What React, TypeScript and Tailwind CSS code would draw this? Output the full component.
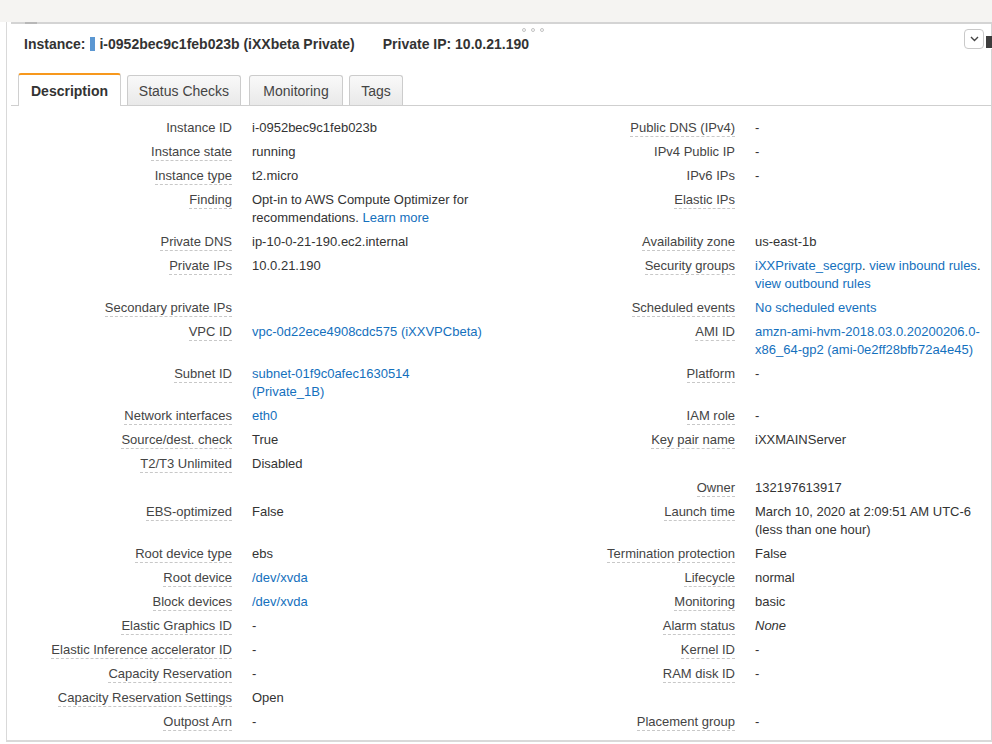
import type { ReactNode } from 'react';

interface Field {
  label?: string;
  value?: ReactNode;
  plain?: boolean;
}

interface Row {
  l: Field;
  r: Field;
}

const A = ({ children }: { children: ReactNode }) => <span className="text-[#1470bd]">{children}</span>;

const rows: Row[] = [
  { l: { label: 'Instance ID', value: 'i-0952bec9c1feb023b', plain: true }, r: { label: 'Public DNS (IPv4)', value: '-' } },
  { l: { label: 'Instance state', value: 'running' }, r: { label: 'IPv4 Public IP', value: '-', plain: true } },
  { l: { label: 'Instance type', value: 't2.micro' }, r: { label: 'IPv6 IPs', value: '-', plain: true } },
  {
    l: {
      label: 'Finding',
      value: (
        <>
          Opt-in to AWS Compute Optimizer for
          <br />
          recommendations. <A>Learn more</A>
        </>
      ),
    },
    r: { label: 'Elastic IPs', value: '' },
  },
  { l: { label: 'Private DNS', value: 'ip-10-0-21-190.ec2.internal' }, r: { label: 'Availability zone', value: 'us-east-1b' } },
  {
    l: { label: 'Private IPs', value: '10.0.21.190' },
    r: {
      label: 'Security groups',
      value: (
        <>
          <A>iXXPrivate_secgrp</A>. <A>view inbound rules</A>.
          <br />
          <A>view outbound rules</A>
        </>
      ),
    },
  },
  { l: { label: 'Secondary private IPs', value: '' }, r: { label: 'Scheduled events', value: <A>No scheduled events</A> } },
  {
    l: { label: 'VPC ID', value: <A>vpc-0d22ece4908cdc575 (iXXVPCbeta)</A> },
    r: {
      label: 'AMI ID',
      value: (
        <A>
          amzn-ami-hvm-2018.03.0.20200206.0-
          <br />
          x86_64-gp2 (ami-0e2ff28bfb72a4e45)
        </A>
      ),
    },
  },
  {
    l: {
      label: 'Subnet ID',
      value: (
        <A>
          subnet-01f9c0afec1630514
          <br />
          (Private_1B)
        </A>
      ),
    },
    r: { label: 'Platform', value: '-' },
  },
  { l: { label: 'Network interfaces', value: <A>eth0</A> }, r: { label: 'IAM role', value: '-' } },
  { l: { label: 'Source/dest. check', value: 'True' }, r: { label: 'Key pair name', value: 'iXXMAINServer' } },
  { l: { label: 'T2/T3 Unlimited', value: 'Disabled' }, r: {} },
  { l: {}, r: { label: 'Owner', value: '132197613917' } },
  {
    l: { label: 'EBS-optimized', value: 'False' },
    r: {
      label: 'Launch time',
      value: (
        <>
          March 10, 2020 at 2:09:51 AM UTC-6
          <br />
          (less than one hour)
        </>
      ),
    },
  },
  { l: { label: 'Root device type', value: 'ebs' }, r: { label: 'Termination protection', value: 'False' } },
  { l: { label: 'Root device', value: <A>/dev/xvda</A> }, r: { label: 'Lifecycle', value: 'normal' } },
  { l: { label: 'Block devices', value: <A>/dev/xvda</A> }, r: { label: 'Monitoring', value: 'basic' } },
  { l: { label: 'Elastic Graphics ID', value: '-' }, r: { label: 'Alarm status', value: <i>None</i> } },
  { l: { label: 'Elastic Inference accelerator ID', value: '-' }, r: { label: 'Kernel ID', value: '-' } },
  { l: { label: 'Capacity Reservation', value: '-' }, r: { label: 'RAM disk ID', value: '-' } },
  { l: { label: 'Capacity Reservation Settings', value: 'Open' }, r: {} },
  { l: { label: 'Outpost Arn', value: '-' }, r: { label: 'Placement group', value: '-' } },
  { l: {}, r: { label: 'Partition number', value: '-' } },
];

function Label({ f }: { f: Field }) {
  return (
    <div className="text-right">
      {f.label && (
        <span
          className={
            f.plain
              ? 'inline-block leading-[17px]'
              : 'inline-block border-b border-dashed border-[#c8c8c8] leading-[17px]'
          }
        >
          {f.label}
        </span>
      )}
    </div>
  );
}

function Value({ f }: { f: Field }) {
  return <div className="pl-5 whitespace-nowrap text-[#333]">{f.value}</div>;
}

const tabs = [
  { name: 'Description', cls: 'w-[103px]' },
  { name: 'Status Checks', cls: 'ml-[6px] w-[114px]' },
  { name: 'Monitoring', cls: 'ml-[8px] w-[94px]' },
  { name: 'Tags', cls: 'ml-[6px] w-[54px]' },
];

export default function App() {
  return (
    <div className="h-[744px] w-[992px] overflow-hidden bg-white font-['Liberation_Sans',Arial,Helvetica,sans-serif] text-[#444]">
      {/* console backdrop */}
      <div className="h-[22px] bg-[#f5f4f2]" />

      <div className="relative ml-[6px] h-[720px] overflow-hidden border-b-2 border-l border-[#d9d9d9]">
        <div className="relative ml-[4px] h-full border-r border-t-2 border-[#d4d4d4]">
          <div className="absolute -top-[2px] left-[14px] h-[2px] w-[12px] bg-[#b8b8b8]" />

          {/* drag handle */}
          <div className="absolute left-[511px] top-[4px] flex gap-[5px]">
            <span className="h-[4px] w-[4px] rounded-full border border-[#c2c2c2]" />
            <span className="h-[4px] w-[4px] rounded-full border border-[#c2c2c2]" />
            <span className="h-[4px] w-[4px] rounded-full border border-[#c2c2c2]" />
          </div>

          {/* collapse button */}
          <button className="absolute right-[7px] top-[5px] flex h-[20px] w-[20px] items-center justify-center rounded-[4px] border border-[#c9c9c9] bg-white">
            <svg width="9" height="6" viewBox="0 0 9 6" fill="none" stroke="#444" strokeWidth="1.4">
              <polyline points="1 1 4.5 4.5 8 1" />
            </svg>
          </button>

          {/* header */}
          <div className="flex items-center pl-[13px] pt-[10px] text-[14px] font-bold leading-[20px] text-[#333]">
            <span>Instance:</span>
            <span className="ml-[5px] h-[14px] w-[5px] bg-[#5b97d2]" />
            <span className="ml-[4px]">i-0952bec9c1feb023b (iXXbeta Private)</span>
            <span className="ml-[28px]">Private IP: 10.0.21.190</span>
          </div>

          {/* tabs */}
          <div className="mt-[19px] flex h-[33px] items-end border-b border-[#cfcfcf] pl-[7px] text-[14px]">
            {tabs.map((t, i) =>
              i === 0 ? (
                <div
                  key={t.name}
                  className={`${t.cls} -mb-px flex h-[33px] items-center justify-center rounded-t-[3px] border-x border-t-2 border-[#d0d0d0] border-t-[#f7981d] bg-white pt-[1px] font-bold text-[#333]`}
                >
                  {t.name}
                </div>
              ) : (
                <div
                  key={t.name}
                  className={`${t.cls} flex h-[30px] items-center justify-center rounded-t-[3px] border-x border-t border-[#cccccc] bg-gradient-to-b from-[#f9f9f9] to-[#e9e9e9] pt-[1px] text-[#444]`}
                >
                  {t.name}
                </div>
              )
            )}
          </div>

          {/* description table */}
          <div className="pt-[13px] text-[13px] leading-[18px]">
            {rows.map((row, i) => (
              <div key={i} className="grid grid-cols-[221px_251px_252px_1fr] pb-[6px]">
                <Label f={row.l} />
                <Value f={row.l} />
                <Label f={row.r} />
                <Value f={row.r} />
              </div>
            ))}
          </div>
        </div>

        <div className="absolute right-0 top-[14px] h-[13px] w-[6px] border-b border-white bg-[#3d3d3d]" />
      </div>
    </div>
  );
}
